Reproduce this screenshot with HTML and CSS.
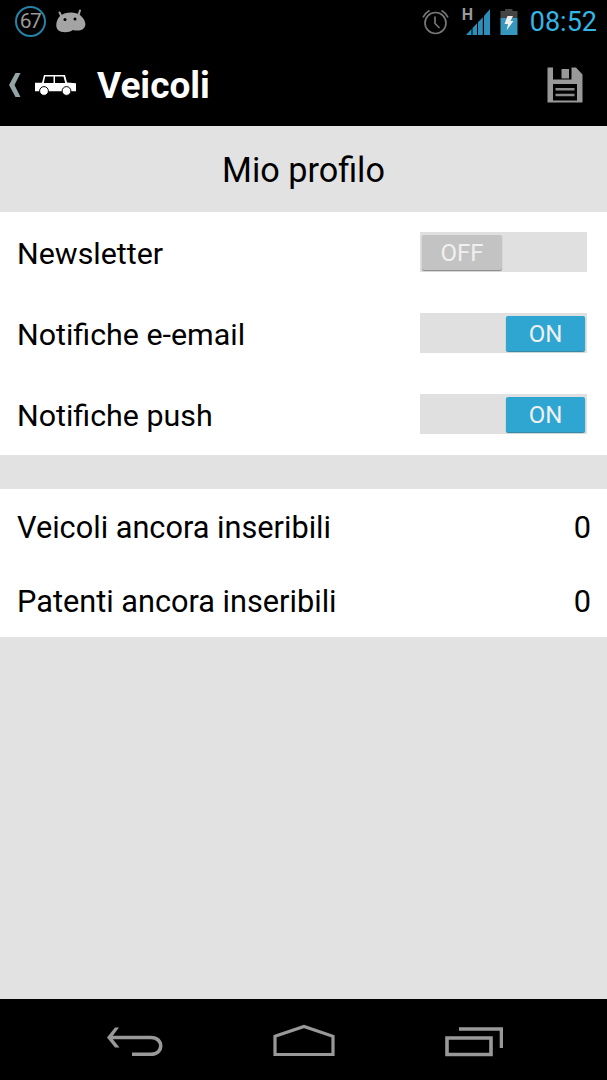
FILE: index.html
```html
<!DOCTYPE html>
<html lang="it">
<head>
    <meta charset="UTF-8">
    <meta name="viewport" content="width=device-width, initial-scale=1.0">
    <title>Veicoli</title>
    <link rel="stylesheet" href="styles.css">
</head>
<body>
    <div class="phone">
        <div class="status-bar">
            <span class="battery-level">67</span>
            <svg class="icon-android" width="30" height="24" viewBox="0 0 30 24">
                <path d="M3.500 3.500l2.500 5M24 1.500l-2 6" stroke="#a4a4a4" stroke-width="2" stroke-linecap="round"/>
                <path d="M4 7C9 2.500 20 2.500 24 6C29 10 31 16 28 19C26 22 20 22 17 21C13 24 5 24 2 21C-1 18 0 11 4 7Z" fill="#a4a4a4"/>
                <circle cx="9" cy="10.500" r="1.500"/>
                <circle cx="19" cy="10" r="1.500"/>
            </svg>
            <div class="status-right">
                <svg width="28" height="28" viewBox="0 0 28 28" fill="none" stroke="#777" stroke-width="1.700">
                    <circle cx="13.500" cy="15" r="10.500"/>
                    <path d="M13 8.500v7l4.500 4.500M1 9.500Q3 5 7.500 2.500M19.500 2.500Q24 5 26 9.500"/>
                </svg>
                <div class="signal">
                    <span class="network">H</span>
                    <svg width="24" height="28" viewBox="0 0 24 28" fill="#2b8fba">
                        <path d="M0 27L5.500 21V27ZM6.500 27V20L11 15.300V27ZM12 27V14.300L16.800 9.300V27ZM18 27V8L24 1V27Z"/>
                    </svg>
                </div>
                <svg width="18" height="28" viewBox="0 0 18 28">
                    <path d="M0.500 3H5V1H12.500V3H17.500V10H0.500Z" fill="#444"/>
                    <path d="M0.500 10H17.500V27H0.500Z" fill="#3797bd"/>
                    <path d="M7.500 8H13L10.500 13H13.500L6.500 22.500L8 16H4.500Z" fill="#eee"/>
                </svg>
                <span class="clock">08:52</span>
            </div>
        </div>

        <div class="action-bar">
            <svg width="13" height="24" viewBox="0 0 13 24">
                <path d="M7.500 0H12.500L6.500 12L12.500 24H7.500L1 12Z" fill="#94a5a5"/>
            </svg>
            <svg class="icon-car" width="42" height="22" viewBox="0 0 42 22">
                <path d="M0 8.700H7L9 1H30L32 8.500L41 9.200V17.300H0Z" fill="#fff"/>
                <path d="M10.200 2.600H18.500V9H8.800ZM20 2.600H28.500L30.200 9H20Z" fill="#000"/>
                <circle cx="9" cy="17" r="4.400" fill="#fff" stroke="#000" stroke-width="1"/>
                <circle cx="31.500" cy="17" r="4.400" fill="#fff" stroke="#000" stroke-width="1"/>
            </svg>
            <h1>Veicoli</h1>
            <svg class="icon-save" width="36" height="36" viewBox="0 0 36 36">
                <path d="M0.500 0.500H6V12.500H24.500V0.500H29L35.500 7.500V35.500H0.500Z" fill="#999"/>
                <path d="M14.500 2H22V11.500H14.500Z" fill="#999"/>
                <path d="M6 17H30V33.500H6Z" fill="#000"/>
                <path d="M8.500 22.300H27.500M8.500 28H27.500" stroke="#8b8b8b" stroke-width="2.400"/>
            </svg>
        </div>

        <h2>Mio profilo</h2>

        <div class="section">
            <div class="row">
                <span class="label">Newsletter</span>
                <div class="switch"><span class="thumb">OFF</span></div>
            </div>
            <div class="row">
                <span class="label">Notifiche e-email</span>
                <div class="switch on"><span class="thumb">ON</span></div>
            </div>
            <div class="row">
                <span class="label">Notifiche push</span>
                <div class="switch on"><span class="thumb">ON</span></div>
            </div>
        </div>

        <div class="section counters">
            <div class="row">
                <span class="label">Veicoli ancora inseribili</span>
                <span class="count">0</span>
            </div>
            <div class="row">
                <span class="label">Patenti ancora inseribili</span>
                <span class="count">0</span>
            </div>
        </div>

        <div class="nav-bar">
            <svg width="58" height="34" viewBox="0 0 58 34" fill="none" stroke="#999" stroke-width="3.600">
                <path d="M14 3.500H10L2 13.500L10 23.500H14.500L6.500 13.500Z" fill="#999" stroke="none"/>
                <path d="M4 13.500H46C59 13.500 59 30.300 46 30.300H27"/>
            </svg>
            <svg width="62" height="34" viewBox="0 0 62 34" fill="none" stroke="#999" stroke-width="3.200">
                <path d="M2 12.300L31 2.400L60 12.300V30.500H2Z"/>
            </svg>
            <svg width="58" height="34" viewBox="0 0 58 34" fill="none" stroke="#999" stroke-width="3.600">
                <path d="M2 14H46V30.500H2ZM14 5H56.500V24"/>
            </svg>
        </div>
    </div>
</body>
</html>
```
FILE: styles.css
```css
* {
    box-sizing: border-box;
}
body {
    margin: 0;
    background-color: #000;
    font-family: Roboto, sans-serif;
}
.phone {
    display: flex;
    flex-direction: column;
    width: 607px;
    height: 1080px;
    overflow: hidden;
    background-color: #e2e2e2;
    color: #000;
}
svg {
    display: block;
    flex: none;
}
.status-bar {
    display: flex;
    align-items: center;
    height: 43px;
    padding: 0 10px 0 15px;
    background-color: #000;
}
.battery-level {
    width: 31px;
    height: 31px;
    border: 2px solid #2582a8;
    border-radius: 50%;
    color: #999;
    font-size: 21px;
    line-height: 27px;
    letter-spacing: -1.5px;
    text-indent: -1px;
    text-align: center;
}
.icon-android {
    margin-left: 10px;
    margin-bottom: 1px;
}
.status-right {
    display: flex;
    align-items: center;
    margin-left: auto;
}
.signal {
    display: flex;
    align-items: flex-start;
    margin: 0 10px 0 12px;
}
.network {
    width: 10px;
    margin-right: -6px;
    color: #999;
    font-size: 16px;
    font-weight: bold;
    line-height: 14px;
}
.clock {
    margin-left: 12px;
    color: #33b5e5;
    font-size: 27px;
    line-height: 32px;
}
.action-bar {
    display: flex;
    align-items: center;
    height: 83px;
    padding: 0 24px 0 8px;
    background-color: #000;
}
.icon-car {
    margin-left: 14px;
}
h1 {
    margin: 2px 0 0 20px;
    color: #fff;
    font-size: 37px;
    line-height: 44px;
}
.icon-save {
    margin-left: auto;
}
h2 {
    height: 86px;
    margin: 0;
    font-size: 34.2px;
    font-weight: normal;
    line-height: 88px;
    text-align: center;
}
.section {
    background-color: #fff;
}
.row {
    display: flex;
    align-items: center;
    justify-content: space-between;
    height: 81px;
    padding: 0 20px 0 17px;
    font-size: 30.4px;
}
.label, .count {
    padding-top: 2px;
}
.switch {
    display: flex;
    width: 167px;
    height: 40px;
    margin-bottom: 2px;
    padding: 3px 2px;
    background-color: #e0e0e0;
}
.switch.on {
    justify-content: flex-end;
}
.thumb {
    width: 80px;
    height: 35px;
    border-radius: 2px;
    background-color: #c3c3c3;
    box-shadow: 0 1px 1px #888;
    color: #f0f0f0;
    font-size: 24px;
    line-height: 36px;
    text-align: center;
}
.on .thumb {
    width: 79px;
    background-color: #2ea6d1;
    box-shadow: 0 1px 1px #2680a0;
}
.counters {
    margin-top: 34px;
}
.counters .row {
    height: 74px;
    padding-right: 16px;
    font-size: 30.7px;
}
.nav-bar {
    display: flex;
    justify-content: center;
    gap: 110px;
    height: 81px;
    margin-top: auto;
    padding-top: 25px;
    background-color: #000;
}
```
